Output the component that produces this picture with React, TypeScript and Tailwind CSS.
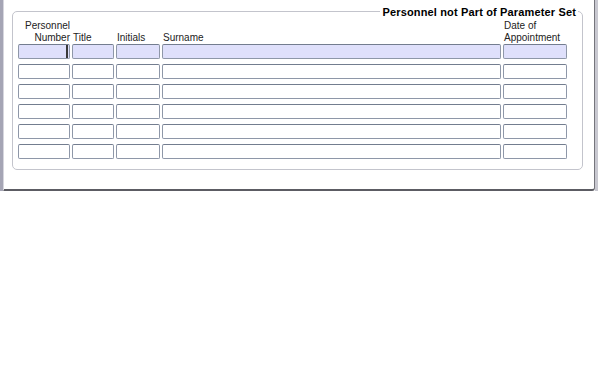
const columns = ["w-[52px]", "w-[42px]", "w-[44px]", "w-[339px]", "w-[64px]"];

const rows = [0, 1, 2, 3, 4, 5];

function Field({ active, caret }: { active: boolean; caret?: boolean }) {
  return (
    <div
      className={`h-[15px] rounded-[2px] border border-[#8e97a8] border-t-[#737d8f] flex justify-end ${
        active ? "bg-[#dfe0fb]" : "bg-white"
      }`}
    >
      {caret && <div className="w-[2px] h-full bg-[#3a3a3a] mr-[1px]" />}
    </div>
  );
}

export default function App() {
  return (
    <div
      className="w-[600px] h-[377px] bg-white text-[#222]"
      style={{ fontFamily: '"Liberation Sans", Arial, sans-serif' }}
    >
      <div className="w-[598px] h-[191px] border-l-[3px] border-l-[#a5a5b5] border-r-[3px] border-r-[#c8c8d0]">
        <div className="h-full border-l border-l-[#d6d6de] border-r border-r-[#75757c] border-b-2 border-b-[#5c5c63] rounded-br-[3px] pl-[8px] pr-[11px] pt-[4px]">
          <fieldset className="border border-[#c3c4cc] rounded-[5px] pl-[5px] pb-[10px]">
            <legend className="ml-auto mr-[4px] px-[2px] pt-[2px] text-[11px] leading-[12px] font-bold tracking-[0.15px] text-black">
              Personnel not Part of Parameter Set
            </legend>

            {/* column headers */}
            <div className="flex gap-x-[2px] text-[10px] leading-[12px] mt-[2px]">
              <div className={`${columns[0]} flex flex-col text-right`}>
                <span>Personnel</span>
                <span>Number</span>
              </div>
              <div className={`${columns[1]} flex flex-col justify-end pl-px`}>
                <span>Title</span>
              </div>
              <div className={`${columns[2]} flex flex-col justify-end pl-px`}>
                <span>Initials</span>
              </div>
              <div className={`${columns[3]} flex flex-col justify-end pl-px`}>
                <span>Surname</span>
              </div>
              <div className={`${columns[4]} flex flex-col pl-px`}>
                <span>Date of</span>
                <span>Appointment</span>
              </div>
            </div>

            {/* input rows */}
            <div className="flex flex-col gap-y-[5px]">
              {rows.map((r) => (
                <div key={r} className="flex gap-x-[2px]">
                  {columns.map((w, i) => (
                    <div key={i} className={w}>
                      <Field active={r === 0} caret={r === 0 && i === 0} />
                    </div>
                  ))}
                </div>
              ))}
            </div>
          </fieldset>
        </div>
      </div>
    </div>
  );
}
